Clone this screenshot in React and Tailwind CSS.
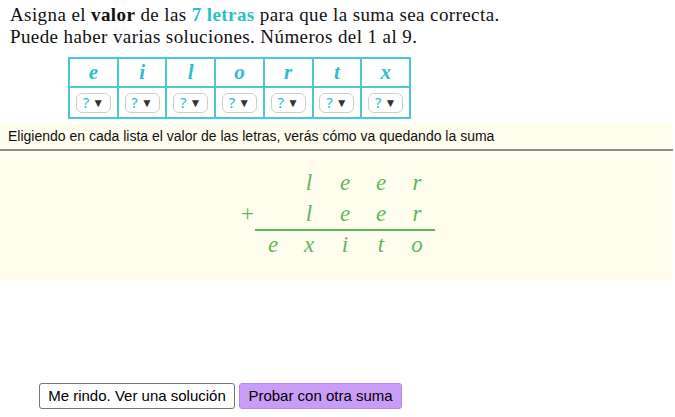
import React from "react";

const letters = ["e", "i", "l", "o", "r", "t", "x"];

const Pick = () => (
  <div className="mx-auto flex h-[20px] w-[35px] items-center justify-center gap-[3px] rounded-[6px] border border-[#cfcfcf] bg-white">
    <span className="text-[15px] leading-none text-[#2bbfc9]">?</span>
    <span className="text-[12px] leading-none text-[#333]">▼</span>
  </div>
);

const Cell = ({ children, className = "" }) => (
  <div className={"flex w-[36px] justify-center " + className}>{children}</div>
);

const App = () => {
  return (
    <div className="flex h-[417px] w-[675px] flex-col bg-white">
      {/* Enunciado */}
      <div className="pl-[10px] pt-[4px] font-['Liberation_Serif',serif] text-[19px] leading-[22px] tracking-[0.4px] text-[#111]">
        <p>
          Asigna el <b>valor</b> de las{" "}
          <b className="text-[#2bbfc9]">7 letras</b> para que la suma sea correcta.
        </p>
        <p>Puede haber varias soluciones. Números del 1 al 9.</p>
      </div>

      {/* Tabla de letras */}
      <div className="ml-[68px] mt-[9px] grid w-[343px] grid-cols-7 border-t-2 border-l-2 border-[#4cc8d0]">
        {letters.map((l) => (
          <div
            key={l}
            className="flex h-[29px] items-center justify-center border-r-2 border-b-2 border-[#4cc8d0] font-['Liberation_Serif',serif] text-[21px] font-bold italic text-[#2bbfc9]"
          >
            {l}
          </div>
        ))}
        {letters.map((l) => (
          <div key={l + "s"} className="flex h-[31px] items-center border-r-2 border-b-2 border-[#4cc8d0]">
            <Pick />
          </div>
        ))}
      </div>

      {/* Zona de la suma */}
      <div className="mt-[4px] h-[158px] w-[673px] bg-[#fefdee]">
        <div className="flex h-[28px] items-center border-b-2 border-[#8e8e82] pl-[8px] font-['Liberation_Sans',sans-serif] text-[14px] text-[#111]">
          Eligiendo en cada lista el valor de las letras, verás cómo va quedando la suma
        </div>

        <div className="ml-[240px] mt-[16px] flex flex-col font-['Liberation_Serif',serif] text-[23px] italic leading-[31px] text-[#5cb85c]">
          <div className="flex pl-[15px]">
            <Cell />
            <Cell>l</Cell>
            <Cell>e</Cell>
            <Cell>e</Cell>
            <Cell>r</Cell>
          </div>
          <div className="flex">
            <span className="w-[15px] text-center not-italic">+</span>
            <div className="flex border-b-2 border-[#5cb85c]">
              <Cell />
              <Cell>l</Cell>
              <Cell>e</Cell>
              <Cell>e</Cell>
              <Cell>r</Cell>
            </div>
          </div>
          <div className="flex pl-[15px] leading-[28px]">
            <Cell>e</Cell>
            <Cell>x</Cell>
            <Cell>i</Cell>
            <Cell>t</Cell>
            <Cell>o</Cell>
          </div>
        </div>
      </div>

      {/* Botones */}
      <div className="ml-[39px] mt-[102px] flex gap-[4px] font-['Liberation_Sans',sans-serif] text-[15px] text-black">
        <button className="h-[26px] w-[196px] rounded-[3px] border border-[#767676] bg-white">
          Me rindo. Ver una solución
        </button>
        <button className="h-[26px] w-[163px] rounded-[3px] border border-[#b58ae6] bg-[#c89cf7]">
          Probar con otra suma
        </button>
      </div>
    </div>
  );
};

export default App;
